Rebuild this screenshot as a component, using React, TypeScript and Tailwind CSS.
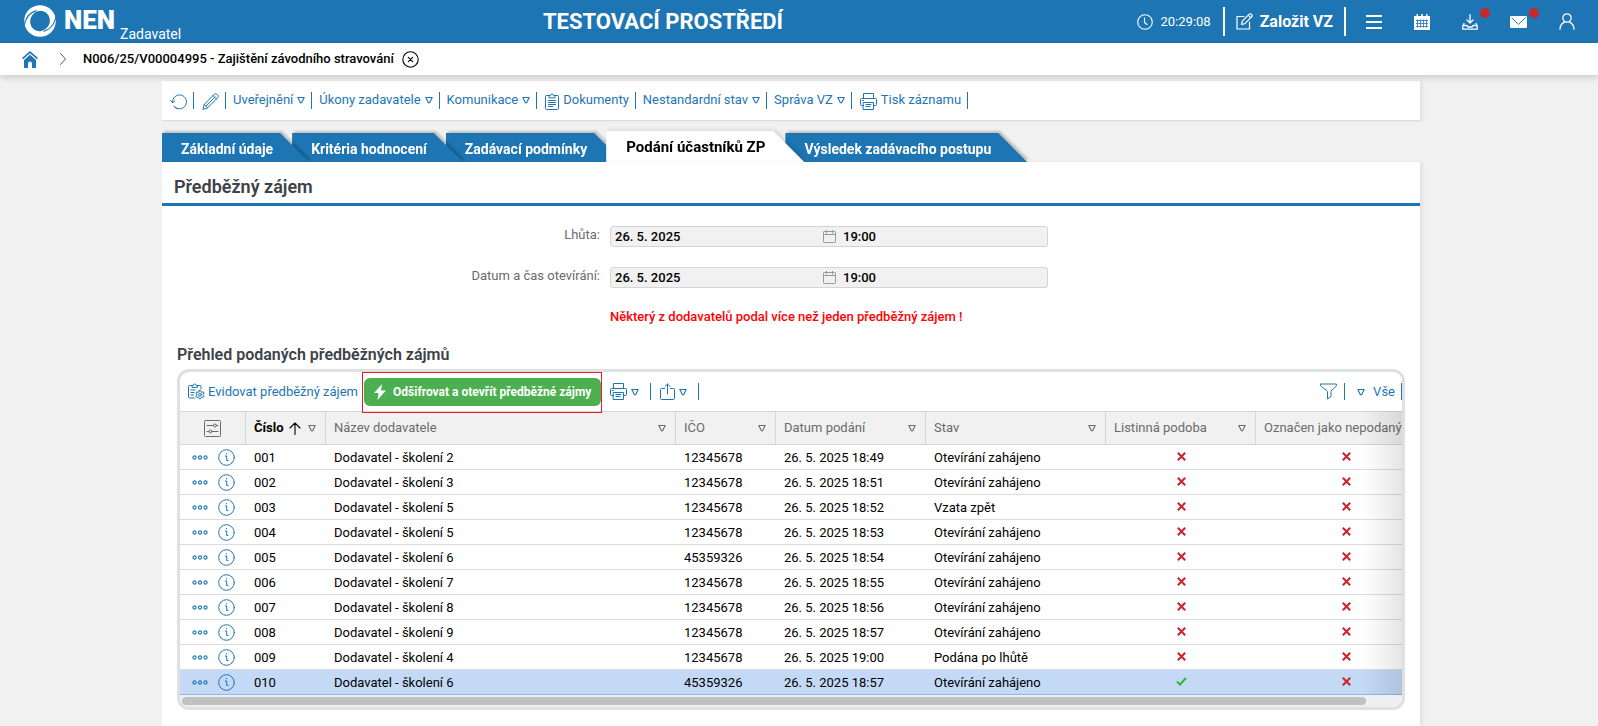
import type { ReactNode } from "react";

type IconProps = { className?: string };

const base = {
  fill: "none",
  stroke: "currentColor",
  strokeLinecap: "round" as const,
  strokeLinejoin: "round" as const,
  "aria-hidden": true,
};

const Triangle = ({ className = "" }: IconProps) => (
  <svg {...base} className={`shrink-0 ${className}`} width="8" height="8" viewBox="0 0 8 8" strokeWidth="1.1">
    <path d="M0.8 1.5h6.4L4.6 6.8H3.4z" />
  </svg>
);

const RefreshIcon = () => (
  <svg {...base} width="17" height="16" viewBox="0 0 17 16" strokeWidth="1">
    <path d="M2.5 8.5a7 7 0 1 1 1.6 3.9" />
    <path d="M0.6 6.6l2 2.2 2.2-1.8" />
    <path d="M4.1 12.4a7 7 0 0 0 3 2.1" />
  </svg>
);

const PencilIcon = () => (
  <svg {...base} width="17" height="17" viewBox="0 0 17 17" strokeWidth="1">
    <path d="M1 16l1.2-4.6L12.4 1.2a1.6 1.6 0 0 1 2.3 0l1.1 1.1a1.6 1.6 0 0 1 0 2.3L5.6 14.8z" />
    <path d="M2.2 11.4l3.4 3.4M11 2.6L14.4 6M4 13L13 4" />
  </svg>
);

const ClipboardIcon = () => (
  <svg {...base} width="14" height="17" viewBox="0 0 14 17" strokeWidth="1">
    <path d="M4 2.5H1.5a1 1 0 0 0-1 1v12a1 1 0 0 0 1 1h11a1 1 0 0 0 1-1v-12a1 1 0 0 0-1-1H10" />
    <path d="M4 4.500V2.500h1.500a1.500 1.500 0 0 1 3 0H10v2z" />
    <path d="M3.500 7.500h7M3.500 9.500h7M3.500 11.500h7M3.500 13.500h4" />
  </svg>
);

const PrinterIcon = () => (
  <svg {...base} width="17" height="17" viewBox="0 0 17 17" strokeWidth="1">
    <path d="M3.500 5.500v-5h10v5" />
    <path d="M3.500 12.500h-2a1 1 0 0 1-1-1v-5a1 1 0 0 1 1-1h14a1 1 0 0 1 1 1v5a1 1 0 0 1-1 1h-2" />
    <path d="M3.500 9.500h10v7h-10zM6 11.500h5M6 13.500h4M2.500 7.500h1" />
  </svg>
);

const ShareIcon = () => (
  <svg {...base} width="15" height="17" viewBox="0 0 15 17" strokeWidth="1">
    <path d="M4.500 5.500h-3a1 1 0 0 0-1 1v9a1 1 0 0 0 1 1h12a1 1 0 0 0 1-1v-9a1 1 0 0 0-1-1h-3" />
    <path d="M7.500 11V1M5 3.500L7.500 1 10 3.500" />
  </svg>
);

const ClipboardGearIcon = () => (
  <svg {...base} width="17" height="17" viewBox="0 0 17 17" strokeWidth="1">
    <path d="M3.500 2.500h-2a1 1 0 0 0-1 1V14a1 1 0 0 0 1 1H6.500M9.500 2.500H12a1 1 0 0 1 1 1V6" />
    <path d="M4 4V2.500h1.200a1.500 1.500 0 0 1 3 0h1.300V4z" />
    <path d="M3 7h4M3 9.500h3M3 12h2.500" />
    <path d="M11.300 7.500h1.400l.3 1.300 1 .5 1.300-.4.8 1.200-.9 1 0 1.100.9 1-.8 1.200-1.300-.4-1 .5-.3 1.300h-1.400l-.3-1.300-1-.5-1.300.4-.8-1.200.9-1 0-1.100-.9-1 .8-1.200 1.300.4 1-.5z" />
    <circle cx="12" cy="11.700" r="1.400" />
  </svg>
);

const FilterIcon = () => (
  <svg {...base} width="17" height="17" viewBox="0 0 17 17" strokeWidth="1">
    <path d="M0.600 1h15.800v1.500c0 2-5.400 4-5.400 6v5L7.500 16V8.500C7 6.500.6 4.500.6 2.500z" />
  </svg>
);

const InfoIcon = () => (
  <svg {...base} width="17" height="17" viewBox="0 0 17 17" strokeWidth="1">
    <circle cx="8.500" cy="8.500" r="7.800" />
    <path d="M7.300 7h1.400v4.500h1.300M8.500 4.500v.4" />
  </svg>
);

const DotsIcon = () => (
  <svg {...base} width="16" height="5" viewBox="0 0 16 5" strokeWidth="1.100">
    <circle cx="2.500" cy="2.500" r="1.600" />
    <circle cx="8" cy="2.500" r="1.600" />
    <circle cx="13.500" cy="2.500" r="1.600" />
  </svg>
);

const SettingsIcon = () => (
  <svg {...base} width="17" height="17" viewBox="0 0 17 17" strokeWidth="1">
    <rect x="0.500" y="0.500" width="16" height="16" rx="1" />
    <path d="M3 5.500h6.500M12.500 5.500H14M3 11.500h2M8 11.500h6" />
    <circle cx="11" cy="5.500" r="1.500" />
    <circle cx="6.500" cy="11.500" r="1.500" />
  </svg>
);

const CalendarOutline = () => (
  <svg {...base} width="13" height="13" viewBox="0 0 13 13" strokeWidth="1">
    <rect x="0.500" y="1.500" width="12" height="11" rx="0.800" />
    <path d="M0.500 4.500h12M3.500 0v3M9.500 0v3" />
  </svg>
);

const Cross = () => (
  <svg width="9" height="9" viewBox="0 0 9 9" role="img" aria-label="Ne" className="inline-block text-[#c9282d]">
    <path d="M0.800 0.800l7.400 7.400M8.200 0.800L0.800 8.200" stroke="currentColor" strokeWidth="2.100" fill="none" />
  </svg>
);

const Check = () => (
  <svg width="11" height="9" viewBox="0 0 11 9" role="img" aria-label="Ano" className="inline-block text-[#36b336]">
    <path d="M1 4.500l3 3L10 1" stroke="currentColor" strokeWidth="2" fill="none" />
  </svg>
);

const HeaderBar = () => (
  <header className="relative flex h-[43px] items-center justify-between bg-[#1e75b3] text-white">
    <a href="#" className="ml-6 flex h-full items-start">
      <svg width="32" height="32" viewBox="0 0 32 32" className="mt-[5px]" aria-hidden="true">
        <circle cx="16" cy="16" r="15.800" fill="#fff" />
        <ellipse cx="16" cy="16" rx="9.800" ry="10.300" transform="rotate(35 16 16)" fill="#1e75b3" />
        <path d="M0 20.500C1.500 13 5.500 7.500 12.500 5.600" stroke="#1e75b3" strokeWidth="1.100" fill="none" />
        <path d="M32 11.500C30.500 19 26.500 24.500 19.500 26.400" stroke="#1e75b3" strokeWidth="1.100" fill="none" />
      </svg>
      <span className="ml-2 text-[26px] leading-[40px] font-black">NEN</span>
      <span className="mt-6 ml-[5px] text-sm leading-5">Zadavatel</span>
    </a>
    <p className="absolute left-1/2 -translate-x-[calc(50%+136px)] text-[22px] leading-6 font-bold whitespace-nowrap">
      TESTOVACÍ PROSTŘEDÍ
    </p>
    <div className="mr-[23px] flex items-center">
      <svg {...base} width="16" height="16" viewBox="0 0 16 16" strokeWidth="1.100">
        <circle cx="8" cy="8" r="7.300" />
        <path d="M7.500 4v4.500l2.500 2" />
      </svg>
      <time className="ml-2 text-[13px]">20:29:08</time>
      <div className="ml-3 flex h-[29px] items-center border-x-2 border-white px-[11px]">
        <button type="button" className="flex items-center gap-[7px] text-base font-bold">
          <svg {...base} width="17" height="17" viewBox="0 0 17 17" strokeWidth="1.200">
            <path d="M8 3.500H1v12.500h12.500V9" />
            <path d="M5.500 11.500l.8-3.300 7-7a1.300 1.300 0 0 1 1.900 0l.6.600a1.300 1.300 0 0 1 0 1.900l-7 7z" />
            <path d="M12.300 2.300l2.400 2.400" />
          </svg>
          Založit VZ
        </button>
      </div>
      <nav className="ml-5 flex items-center gap-8">
        <button type="button" aria-label="Menu">
          <svg {...base} width="16" height="16" viewBox="0 0 16 16" strokeWidth="2" strokeLinecap="butt">
            <path d="M0 2h16M0 8h16M0 14h16" />
          </svg>
        </button>
        <button type="button" aria-label="Kalendář">
          <svg width="16" height="16" viewBox="0 0 16 16" aria-hidden="true">
            <path fill="#fff" d="M0 2h2.500V0h1.500v2h3.200V0h1.600v2H12V0h1.500v2H16v14H0z" />
            <path d="M2 6.500h12M2 9.500h12M2 12.500h12M3.500 5.500v8M6.500 5.500v8M9.500 5.500v8M12.500 5.500v8" stroke="#1e75b3" strokeWidth="1" opacity="0.850" />
          </svg>
        </button>
        <button type="button" aria-label="Stažené soubory" className="relative">
          <svg {...base} width="16" height="16" viewBox="0 0 16 16" strokeWidth="1.300">
            <path d="M8 0.700v8M5 6l3 3 3-3" />
            <path d="M2 9.500L.8 12v3.200h14.400V12L14 9.500M.8 11.500H5l.8 1.500h4.400l.8-1.500h4.200" />
          </svg>
          <span className="absolute -top-[6px] left-[18px] size-[10px] rounded-full bg-[#c9282d]" />
        </button>
        <button type="button" aria-label="Zprávy" className="relative">
          <svg width="17" height="12" viewBox="0 0 17 12" aria-hidden="true">
            <rect width="17" height="12" rx="1" fill="#fff" />
            <path d="M1.500 1.500l7 7 7-7" stroke="#1e75b3" strokeWidth="0.900" fill="none" />
          </svg>
          <span className="absolute -top-2 left-[19px] size-[10px] rounded-full bg-[#c9282d]" />
        </button>
        <button type="button" aria-label="Uživatel">
          <svg {...base} width="16" height="17" viewBox="0 0 16 17" strokeWidth="1.200">
            <circle cx="8" cy="5" r="4.200" />
            <path d="M1 16.300c0-4 2-6 4.500-7.200M15 16.300c0-4-2-6-4.500-7.200" />
          </svg>
        </button>
      </nav>
    </div>
  </header>
);

const Breadcrumb = () => (
  <nav className="relative z-20 flex h-8 items-center bg-white pl-[22px] shadow-[0_3px_6px_rgba(0,0,0,0.150)]">
    <a href="#" aria-label="Domů" className="text-[#1e75b3]">
      <svg width="16" height="17" viewBox="0 0 16 17" fill="currentColor" aria-hidden="true">
        <path d="M8 0l8 7-1.100 1.300L8 2.300 1.100 8.300 0 7z" />
        <path d="M2 9l6-5.200L14 9v8h-4v-4.500a2 2 0 0 0-4 0V17H2z" />
      </svg>
    </a>
    <svg {...base} className="ml-[22px] text-[#555]" width="6" height="12" viewBox="0 0 6 12" strokeWidth="1">
      <path d="M0.500 0.500L5.500 6l-5 5.500" />
    </svg>
    <a href="#" className="ml-[17px] text-[13px] font-medium text-black">
      N006/25/V00004995 - Zajištění závodního stravování
    </a>
    <button type="button" aria-label="Zavřít" className="ml-2">
      <svg {...base} width="17" height="17" viewBox="0 0 17 17" strokeWidth="1.100">
        <circle cx="8.500" cy="8.500" r="7.700" />
        <path d="M6.300 6.300l4.400 4.400M10.700 6.300l-4.400 4.400" />
      </svg>
    </button>
  </nav>
);

const ToolItem = ({ icon, label, name, menu }: { icon?: ReactNode; label?: string; name?: string; menu?: boolean }) => (
  <li className={`flex h-[17px] items-center border-r border-[#1e75b3] pr-[6px] first:pl-0 ${icon ? "pl-2" : "pl-[7px]"}`}>
    <button type="button" aria-label={name} className="flex items-center gap-1">
      {icon && <span className="mt-[2px]">{icon}</span>}
      {label && <span className="pb-[2px]">{label}</span>}
      {menu && <Triangle className="mb-[2px]" />}
    </button>
  </li>
);

const RecordToolbar = () => (
  <ul className="flex h-10 items-center border-b border-[#dcdcdc] bg-white pl-2 text-[13px] text-[#1e75b3] shadow-[3px_0_3px_rgba(0,0,0,0.060)]">
    <ToolItem icon={<RefreshIcon />} name="Obnovit" />
    <ToolItem icon={<PencilIcon />} name="Upravit" />
    <ToolItem label="Uveřejnění" menu />
    <ToolItem label="Úkony zadavatele" menu />
    <ToolItem label="Komunikace" menu />
    <ToolItem icon={<ClipboardIcon />} label="Dokumenty" />
    <ToolItem label="Nestandardní stav" menu />
    <ToolItem label="Správa VZ" menu />
    <ToolItem icon={<PrinterIcon />} label="Tisk záznamu" />
  </ul>
);

const tabs = [
  { label: "Základní údaje", z: "z-[5]" },
  { label: "Kritéria hodnocení", z: "z-[4]" },
  { label: "Zadávací podmínky", z: "z-[3]" },
  { label: "Podání účastníků ZP", z: "z-[6]", active: true },
  { label: "Výsledek zadávacího postupu", z: "z-[2]" },
];

const Tabs = () => (
  <div role="tablist" className="mt-[10px] flex h-[31px] items-end">
    {tabs.map((t) => (
      <div
        key={t.label}
        className={`relative ${t.z} ${
          t.active
            ? "-mr-[19px] [filter:drop-shadow(2px_-1px_2px_rgba(0,0,0,0.120))]"
            : "-mr-[17px] [filter:drop-shadow(2px_-2px_1px_rgba(0,0,0,0.200))]"
        }`}
      >
        <button
          type="button"
          role="tab"
          aria-selected={!!t.active}
          className={
            t.active
              ? "block h-[31px] bg-white pt-[2px] pr-[39px] pl-5 text-[15px] font-bold text-black [clip-path:polygon(0_0,calc(100%-31px)_0,100%_100%,0_100%)]"
              : "block h-[29px] bg-[#1e75b3] pt-[2px] pr-9 pl-[19px] text-sm font-bold text-white [clip-path:polygon(0_0,calc(100%-29px)_0,100%_100%,0_100%)]"
          }
        >
          {t.label}
        </button>
      </div>
    ))}
  </div>
);

const DateField = ({ id, label }: { id: string; label: string }) => (
  <div className="flex h-[41px] items-start">
    <label htmlFor={id} className="w-[438px] pr-[10px] text-right text-[13px] leading-[17px] text-[#6b6b6b]">
      {label}
    </label>
    <div className="flex h-[21px] w-[438px] items-center rounded-[3px] border border-[#d4d4d4] bg-[#f1f1f1] text-[13px] font-medium text-black">
      <input id={id} readOnly defaultValue="26. 5. 2025" className="w-[212px] bg-transparent pl-1 outline-none" />
      <span className="text-[#999]">
        <CalendarOutline />
      </span>
      <input aria-label={`${label} čas`} readOnly defaultValue="19:00" className="min-w-0 flex-1 bg-transparent pl-[7px] outline-none" />
    </div>
  </div>
);

const rows = [
  ["001", "Dodavatel - školení 2", "12345678", "26. 5. 2025 18:49", "Otevírání zahájeno"],
  ["002", "Dodavatel - školení 3", "12345678", "26. 5. 2025 18:51", "Otevírání zahájeno"],
  ["003", "Dodavatel - školení 5", "12345678", "26. 5. 2025 18:52", "Vzata zpět"],
  ["004", "Dodavatel - školení 5", "12345678", "26. 5. 2025 18:53", "Otevírání zahájeno"],
  ["005", "Dodavatel - školení 6", "45359326", "26. 5. 2025 18:54", "Otevírání zahájeno"],
  ["006", "Dodavatel - školení 7", "12345678", "26. 5. 2025 18:55", "Otevírání zahájeno"],
  ["007", "Dodavatel - školení 8", "12345678", "26. 5. 2025 18:56", "Otevírání zahájeno"],
  ["008", "Dodavatel - školení 9", "12345678", "26. 5. 2025 18:57", "Otevírání zahájeno"],
  ["009", "Dodavatel - školení 4", "12345678", "26. 5. 2025 19:00", "Podána po lhůtě"],
  ["010", "Dodavatel - školení 6", "45359326", "26. 5. 2025 18:57", "Otevírání zahájeno"],
];

const columns = ["Název dodavatele", "IČO", "Datum podání", "Stav", "Listinná podoba", "Označen jako nepodaný"];

const GridToolbar = () => (
  <div className="relative z-10 flex h-[39px] items-center text-[13px] text-[#1e75b3]">
    <button type="button" className="ml-2 flex items-center gap-[3px]">
      <ClipboardGearIcon />
      Evidovat předběžný zájem
    </button>
    <span className="ml-1 h-[17px] w-px bg-[#1e75b3]" />
    <div className="relative ml-px">
      <button type="button" className="flex h-7 items-center gap-[7px] rounded-md bg-[#4caf50] px-[10px] text-xs font-bold text-white">
        <svg width="12" height="16" viewBox="0 0 12 16" fill="currentColor" aria-hidden="true">
          <path d="M8 0L0 9h4.500L3.500 16 12 6.500H7z" />
        </svg>
        Odšifrovat a otevřít předběžné zájmy
      </button>
      <span className="pointer-events-none absolute -top-[6px] -right-px -bottom-[7px] -left-[2px] border border-[#ed1c24]" />
    </div>
    <button type="button" aria-label="Tisk" className="ml-[9px] flex items-center gap-1">
      <PrinterIcon />
      <Triangle />
    </button>
    <span className="ml-[11px] h-[17px] w-px bg-[#1e75b3]" />
    <button type="button" aria-label="Export" className="ml-[9px] flex items-center gap-1">
      <ShareIcon />
      <Triangle />
    </button>
    <span className="ml-[11px] h-[17px] w-px bg-[#1e75b3]" />
    <button type="button" aria-label="Filtr" className="ml-auto">
      <FilterIcon />
    </button>
    <span className="ml-[7px] h-[17px] w-px bg-[#1e75b3]" />
    <button type="button" className="ml-3 flex items-center gap-2 pr-[6px]">
      <Triangle />
      Vše
    </button>
    <span className="h-[17px] w-px bg-[#1e75b3]" />
  </div>
);

const Grid = () => (
  <div className="mx-[15px] overflow-hidden rounded-xl border-3 border-[#dfe0e1]">
    <GridToolbar />
    <div className="relative overflow-hidden">
      <table className="w-[1256px] table-fixed border-separate border-spacing-0 text-left text-[13px] text-black">
        <colgroup>
          <col className="w-[66px]" />
          <col className="w-[80px]" />
          <col className="w-[350px]" />
          <col className="w-[100px]" />
          <col className="w-[150px]" />
          <col className="w-[180px]" />
          <col className="w-[150px]" />
          <col className="w-[180px]" />
        </colgroup>
        <thead>
          <tr className="h-[34px] bg-[#f1f1f1] text-[#6b6b6b]">
            <th className="border-y border-r border-[#d6d6d6] p-0">
              <button type="button" aria-label="Nastavení sloupců" className="mx-auto block">
                <SettingsIcon />
              </button>
            </th>
            <th className="border-y border-r border-[#d6d6d6] p-0 pl-2 font-bold text-black">
              <button type="button" className="flex items-center">
                Číslo
                <svg {...base} className="ml-[5px]" width="12" height="13" viewBox="0 0 12 13" strokeWidth="1.100">
                  <path d="M6 12.500V1M1 6l5-5 5 5" />
                </svg>
                <Triangle className="ml-[7px] text-[#6b6b6b]" />
              </button>
            </th>
            {columns.map((c, i) => (
              <th key={c} className="border-y border-r border-[#d6d6d6] p-0 pr-[9px] pl-2 font-normal whitespace-nowrap">
                <button type="button" className="flex w-full items-center justify-between">
                  {c}
                  {i < 5 && <Triangle />}
                </button>
              </th>
            ))}
          </tr>
        </thead>
        <tbody>
          {rows.map((r, i) => {
            const selected = i === rows.length - 1;
            const cell = selected ? "border-b border-[#8db8ec] p-0" : "border-b border-[#dcdcdc] p-0";
            return (
              <tr key={r[0]} className={selected ? "h-[25px] bg-[#c3d9f5]" : "h-[25px] bg-white"}>
                <td className={cell}>
                  <div className="flex items-center gap-[10px] pl-3 text-[#1e75b3]">
                    <button type="button" aria-label="Akce">
                      <DotsIcon />
                    </button>
                    <button type="button" aria-label="Detail">
                      <InfoIcon />
                    </button>
                  </div>
                </td>
                {r.map((v, j) => (
                  <td key={j} className={`${cell} pt-[2px] pl-2`}>
                    {v}
                  </td>
                ))}
                <td className={`${cell} text-center leading-none`}>
                  <span className="flex justify-center pb-[2px]">{selected ? <Check /> : <Cross />}</span>
                </td>
                <td className={`${cell} text-center leading-none`}>
                  <span className="flex justify-center pb-[2px]">
                    <Cross />
                  </span>
                </td>
              </tr>
            );
          })}
        </tbody>
      </table>
      <div className="pointer-events-none absolute inset-y-0 right-0 w-10 bg-linear-to-r from-transparent to-black/10" />
    </div>
    <div className="h-3 bg-[#efefef] px-[2px] py-[2px]">
      <div className="h-2 w-[97.2%] rounded-full bg-[#c1c1c1]" />
    </div>
  </div>
);

export default function App() {
  return (
    <div className="flex min-h-screen flex-col overflow-x-hidden bg-[#f1f1f1] font-[Roboto,sans-serif]">
      <HeaderBar />
      <Breadcrumb />
      <div className="flex flex-1 flex-col pr-4">
        <main className="mx-auto mt-[6px] flex w-full max-w-[1258px] flex-1 flex-col">
          <RecordToolbar />
          <Tabs />
          <section className="relative z-10 flex-1 bg-white shadow-[3px_0_3px_rgba(0,0,0,0.060)]">
            <h1 className="h-11 border-b-3 border-[#1e75b3] pl-3 text-lg leading-[49px] font-semibold text-[#3c4248]">Předběžný zájem</h1>
            <div className="pt-5 pl-[10px]">
              <DateField id="deadline" label="Lhůta:" />
              <DateField id="opening" label="Datum a čas otevírání:" />
              <p className="pl-[438px] text-[13px] leading-[18px] font-medium text-[#f00]">
                Některý z dodavatelů podal více než jeden předběžný zájem !
              </p>
            </div>
            <h2 className="mt-[17px] mb-[2px] pl-[15px] text-base leading-6 font-semibold text-[#3c4248]">Přehled podaných předběžných zájmů</h2>
            <Grid />
          </section>
        </main>
      </div>
    </div>
  );
}
